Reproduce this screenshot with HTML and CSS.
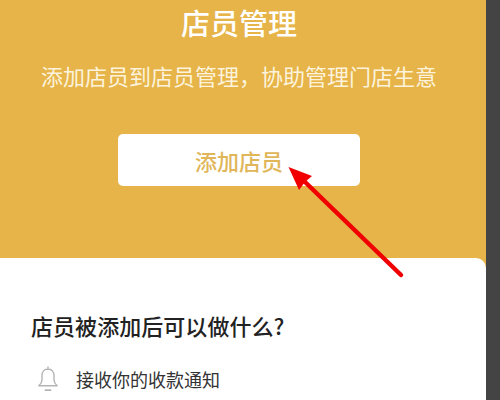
FILE: index.html
```html
<!DOCTYPE html>
<html lang="zh">
<head>
<meta charset="utf-8">
<title>店员管理</title>
<link rel="stylesheet" href="styles.css">
</head>
<body>
<main class="page">
  <section class="hero">
    <h1 class="title">店员管理</h1>
    <p class="subtitle">添加店员到店员管理&#65292;协助管理门店生意</p>
    <button class="add-btn">添加店员</button>
  </section>
  <section class="card">
    <h2 class="card-title">店员被添加后可以做什么?</h2>
    <div class="row">
      <svg class="bell" viewBox="0 0 20 26" width="20" height="26" fill="none" stroke="#b4b4b4" stroke-width="1.4" stroke-linejoin="round" stroke-linecap="round">
        <path d="M10 1v2"/>
        <path d="M10 3c-3.800 0-6 2.800-6 6.600v4.400c0 2.400-1.200 4-3.200 5.800h18.400c-2-1.800-3.200-3.400-3.200-5.800V9.600C16 5.800 13.800 3 10 3z"/>
        <path d="M7.500 24.200h5" stroke-width="1.800"/>
      </svg>
      <span class="row-text">接收你的收款通知</span>
    </div>
  </section>
  <svg class="arrow" viewBox="0 0 500 400" width="500" height="400">
    <path d="M401 275L304 181" stroke="#f00000" stroke-width="4.500" stroke-linecap="round" fill="none"/>
    <path d="M288.500 167L312 176L305 182L299 190Z" fill="#f00000"/>
  </svg>
</main>
</body>
</html>
```
FILE: styles.css
```css
* { box-sizing: border-box; }
html, body { margin: 0; padding: 0; }
body {
  width: 500px;
  height: 400px;
  overflow: hidden;
  background: #444444;
  font-family: "Noto Sans CJK SC", "Liberation Sans", sans-serif;
}
.page {
  position: relative;
  width: 486px;
  height: 400px;
  background: #e6b448;
  overflow: hidden;
}
.hero {
  display: flex;
  flex-direction: column;
  align-items: center;
  height: 258px;
  padding: 2px 8px 0 0;
}
.title {
  margin: 0;
  font-size: 29px;
  line-height: 40px;
  font-weight: 500;
  color: #ffffff;
}
.subtitle {
  margin: 17px 0 0;
  font-size: 22px;
  line-height: 32px;
  font-weight: 400;
  color: #fdf3dc;
}
.add-btn {
  margin-top: 43px;
  width: 242px;
  height: 52px;
  border: none;
  border-radius: 5px;
  background: #ffffff;
  color: #e0b659;
  font-family: inherit;
  font-size: 22px;
  font-weight: 500;
  padding: 0;
}
.card {
  height: 142px;
  background: #ffffff;
  border-radius: 0 10px 0 0;
  padding: 51px 0 0 31px;
}
.card-title {
  margin: 0;
  font-size: 22px;
  line-height: 32px;
  font-weight: 500;
  letter-spacing: 0.05px;
  color: #222222;
}
.row {
  display: flex;
  align-items: center;
  gap: 18px;
  margin-top: 25px;
  padding-left: 7px;
}
.bell { flex: none; }
.row-text {
  font-size: 18px;
  line-height: 26px;
  color: #333333;
}
.arrow {
  position: absolute;
  left: 0;
  top: 0;
  pointer-events: none;
}
```
